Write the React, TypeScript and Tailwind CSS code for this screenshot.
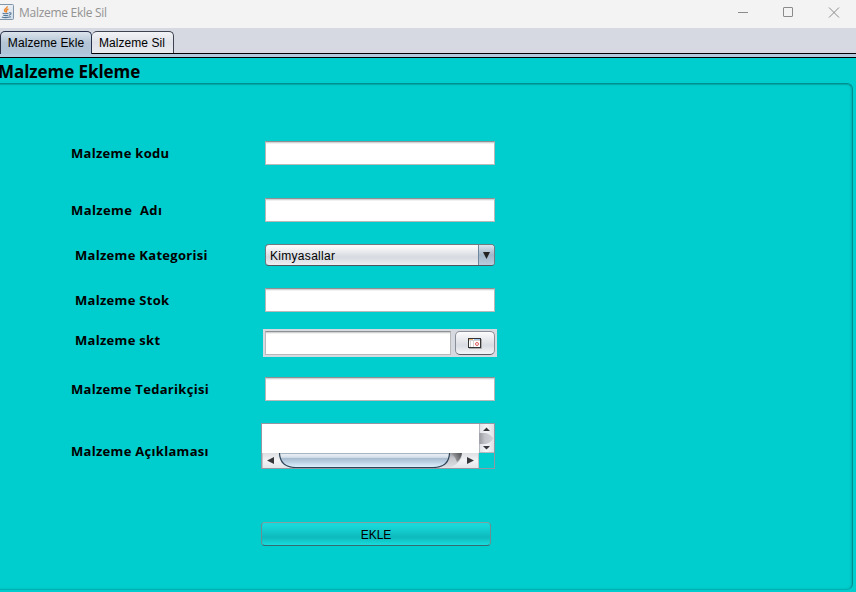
import React from "react";

const labelFont = "font-['Open_Sans','Noto_Sans',sans-serif] font-bold text-[13px] leading-[20px] tracking-[0.3px] text-black whitespace-pre";
const swingFont = "font-['Liberation_Sans',Arial,sans-serif] text-[12px] text-black";

function TextField({ className = "w-[230px] h-6" }: { className?: string }) {
  return (
    <div className={`${className} shrink-0 border border-[#b9b9b9] border-t-[#8f9092] bg-white shadow-[inset_0_1px_0_#d2d3d5,inset_0_2px_0_#f1f1f1]`} />
  );
}

function Row({ label, row, text, children }: { label: string; row: string; text: string; children: React.ReactNode }) {
  return (
    <div className={`flex items-start ${row}`}>
      <div className={`shrink-0 ${labelFont} ${text}`}>{label}</div>
      {children}
    </div>
  );
}

function JavaIcon() {
  return (
    <svg className="h-4 w-[14px] shrink-0" viewBox="0 0 14 16" fill="none">
      <defs>
        <linearGradient id="java-bg" x1="0" y1="0" x2="1" y2="1">
          <stop stopColor="#f8fafc" />
          <stop offset="1" stopColor="#d2dce6" />
        </linearGradient>
      </defs>
      <path d="M0 .5H12.5Q13.5.5 13.5 1.5V14.5Q13.5 15.5 12.5 15.5H0" fill="url(#java-bg)" stroke="#7e95aa" />
      <path d="M7.2 2.200C7.800 4.500 2.200 5.200 5.600 8.300M8.400 5C5.500 6.200 6 7 6.800 8.300" stroke="#ee8427" strokeWidth="1.400" />
      <path d="M2.500 9.300Q5 10.200 8.500 9.300M3.200 11.200Q5.500 12 8.200 11.200M9 8.800Q12 8.300 10.600 10.400L9 11.300M1.800 13Q5.500 14.300 11 12.800" stroke="#54799b" strokeWidth="1.100" />
    </svg>
  );
}

function HorizontalScrollbar() {
  return (
    <svg className="block h-[15px] w-[217px]" viewBox="0 0 217 15">
      <defs>
        <linearGradient id="h-btn" x1="0" y1="0" x2="0" y2="1">
          <stop stopColor="#dddfe3" /><stop offset=".5" stopColor="#f3f4f6" /><stop offset="1" stopColor="#e3e5e9" />
        </linearGradient>
        <linearGradient id="h-track" x1="0" y1="0" x2="0" y2="1">
          <stop stopColor="#9b9da2" /><stop offset=".35" stopColor="#c4c6cb" /><stop offset="1" stopColor="#dcdee3" />
        </linearGradient>
        <linearGradient id="h-edge">
          <stop stopColor="#222" stopOpacity="0" /><stop offset="1" stopColor="#222" stopOpacity=".65" />
        </linearGradient>
        <linearGradient id="h-thumb" x1="0" y1="0" x2="0" y2="1">
          <stop stopColor="#eef3f8" /><stop offset=".3" stopColor="#d4dfea" /><stop offset=".38" stopColor="#a9bdd0" /><stop offset=".65" stopColor="#bdd2e4" /><stop offset="1" stopColor="#e0f3ff" />
        </linearGradient>
      </defs>
      <rect width="217" height="15" fill="url(#h-btn)" />
      <path d="M17 0H200Q200 10 188 14.5H29Q17 10 17 0Z" fill="url(#h-track)" />
      <path d="M188 0H200Q199 6 195 9Q193 3 188 0Z" fill="url(#h-edge)" />
      <path d="M17.5 0Q18 14.5 34 14.5H171Q187 14.5 187.500 0Z" fill="url(#h-thumb)" />
      <path d="M17.5 0Q18 14.5 34 14.5H171Q187 14.5 187.500 0" fill="none" stroke="#2e4559" strokeWidth="1.200" />
      <path d="M18 .5H187" stroke="#a8b5c2" />
      <path d="M12 4V11L5 7.500ZM205 4V11L212 7.500Z" fill="#35373b" />
      <path d="M.5 0V15M216.500 0V15" stroke="#c1c3c8" />
    </svg>
  );
}

function VerticalScrollbar() {
  return (
    <svg className="block h-[29px] w-[15px]" viewBox="0 0 15 29">
      <defs>
        <linearGradient id="v-btn">
          <stop stopColor="#dfe1e5" /><stop offset=".5" stopColor="#f4f5f7" /><stop offset="1" stopColor="#dddfe3" />
        </linearGradient>
        <linearGradient id="v-track">
          <stop stopColor="#96989d" /><stop offset=".4" stopColor="#c1c3c8" /><stop offset="1" stopColor="#d0d2d7" />
        </linearGradient>
      </defs>
      <rect width="15" height="29" fill="url(#v-btn)" />
      <path d="M0 9H7Q11 10 14.500 14.500Q11 19 7 20H0Z" fill="url(#v-track)" />
      <path d="M4 7H11L7.500 3.500ZM4 22H11L7.500 25.500Z" fill="#35373b" />
      <path d="M.5 0V29M0 28.500H15" stroke="#a3a6ad" strokeOpacity=".7" />
    </svg>
  );
}

export default function App() {
  return (
    <div className="flex h-[592px] w-[856px] flex-col overflow-hidden bg-[#00cdcd]">
      <header className="flex h-7 shrink-0 items-start bg-[#f3f3f3]">
        <div className="flex pt-1"><JavaIcon /></div>
        <span className="ml-[5px] mt-1 font-['Open_Sans','Noto_Sans',sans-serif] text-[12px] leading-[18px] tracking-[-0.28px] text-[#929292]">Malzeme Ekle Sil</span>
        <svg className="ml-auto mr-4 h-7 w-[104px]" viewBox="736 0 104 28" fill="none" stroke="#8b8b8b">
          <path d="M738 12.500H748M829 7.500L839 17.500M839 7.500L829 17.500" />
          <rect x="783.500" y="7.500" width="9" height="9" rx=".5" />
        </svg>
      </header>

      <nav className={`flex h-[26px] shrink-0 items-end border-b border-black bg-[#d6d9e1] ${swingFont}`}>
        <div className="-mb-px flex h-[23px] w-[92px] items-center justify-center rounded-t-[5px] border border-b-0 border-[#263048] bg-linear-to-b from-[#dbe4ec] via-[#b3c4d5] to-[#afc5d9]"><span className="tracking-[0.08px]">Malzeme Ekle</span></div>
        <div className="flex h-[22px] w-[82px] items-center justify-center rounded-t-[5px] border border-b-0 border-l-0 border-[#3d4350] bg-linear-to-b from-[#f2f3f6] via-[#dfe2e8] to-[#e9ebef] pr-px"><span className="tracking-[0.08px]">Malzeme Sil</span></div>
      </nav>
      <div className="h-1 shrink-0 border-b border-black bg-[#b3cadf]" />

      <main className="flex flex-1 flex-col">
        <h1 className="-ml-[2px] h-[25px] shrink-0 whitespace-nowrap font-['Open_Sans','Noto_Sans',sans-serif] text-[17px] font-bold leading-[28px] tracking-[-0.06px] text-black">Malzeme Ekleme</h1>
        <section className="-ml-2 mr-[3px] h-[507px] shrink-0 rounded-[6px] border border-[#008f8f] border-b-[#00b0b0] pl-[7px] shadow-[inset_0_1px_1px_#00a8a8,inset_-1px_0_2px_#00b2b2]">
          <div className="flex flex-col pt-[57px]">
            <Row label="Malzeme kodu" row="h-[57px] pl-[71px]" text="w-[194px] pt-[2px]"><TextField /></Row>
            <Row label="Malzeme  Adı" row="h-[46px] pl-[71px]" text="w-[194px] pt-[2px] tracking-[0.4px]"><TextField /></Row>
            <Row label="Malzeme Kategorisi" row="h-[44px] pl-[75px]" text="w-[190px] pt-[1px]">
              <div className={`flex h-[22px] w-[230px] overflow-hidden rounded-[4px] border border-[#747981] border-b-[#50555e] bg-linear-to-b from-[#f9f9fa] from-10% via-[#d6d9df] via-60% to-[#eceef1] ${swingFont}`}>
                <span className="flex-1 pl-1 pt-px leading-[21px] tracking-[0.3px]">Kimyasallar</span>
                <div className="flex w-[16px] items-center justify-center border-l border-[#70869c] bg-linear-to-b from-[#dce5ed] via-[#a2b6ca] to-[#b9ccdd]">
                  <svg className="h-[7px] w-[7px]" viewBox="0 0 7 7"><path d="M0 0H7L3.500 7Z" fill="#222" /></svg>
                </div>
              </div>
            </Row>
            <Row label="Malzeme Stok" row="h-[41px] pl-[75px]" text="w-[190px] pt-[2px]"><TextField /></Row>
            <Row label="Malzeme skt" row="h-[48px] pl-[75px]" text="w-[188px] pt-[1px]">
              <div className="flex h-7 w-[234px] gap-1 bg-[#d6d9df] p-[2px]">
                <TextField className="h-6 w-[186px]" />
                <div className="flex h-6 w-10 items-center justify-center rounded-[5px] border border-[#8b9098] border-b-[#565b64] bg-linear-to-b from-[#fcfcfd] via-[#d9dce2] via-60% to-[#f4f5f7]">
                  <svg className="h-[11px] w-[14px]" viewBox="0 0 14 11" fill="none">
                    <path d="M1 10.500H13.500V1" stroke="#aaa" />
                    <rect x=".5" y=".5" width="12" height="9" fill="#fff" stroke="#343434" />
                    <path d="M1 1.500H5" stroke="#f0b46e" /><path d="M6 1.500H12" stroke="#a6c8ec" />
                    <path d="M1 2.500H12M2.500 3V9M5.500 3V9" stroke="#d4d4d4" />
                    <circle cx="9" cy="6" r="1.500" stroke="#df5959" />
                  </svg>
                </div>
              </div>
            </Row>
            <Row label="Malzeme Tedarikçisi" row="h-[46px] pl-[71px]" text="w-[194px] pt-[2px]"><TextField /></Row>
            <Row label="Malzeme Açıklaması" row="h-[99px] pl-[71px]" text="w-[190px] pt-[18px]">
              <div className="grid h-[46px] w-[234px] grid-cols-[217px_15px] grid-rows-[29px_15px] border border-[#9297a1]">
                <div className="bg-white" />
                <VerticalScrollbar />
                <HorizontalScrollbar />
                <div />
              </div>
            </Row>
            <button className={`ml-[261px] h-6 w-[230px] rounded-[4px] border border-[#6e8d8f] border-t-[#84a0a1] border-b-[#356b70] bg-linear-to-b from-[#18d9da] from-10% via-[#0dbabd] via-65% to-[#18dcdc] pt-[2px] text-center leading-[20px] ${swingFont}`}>EKLE</button>
          </div>
        </section>
      </main>
    </div>
  );
}
